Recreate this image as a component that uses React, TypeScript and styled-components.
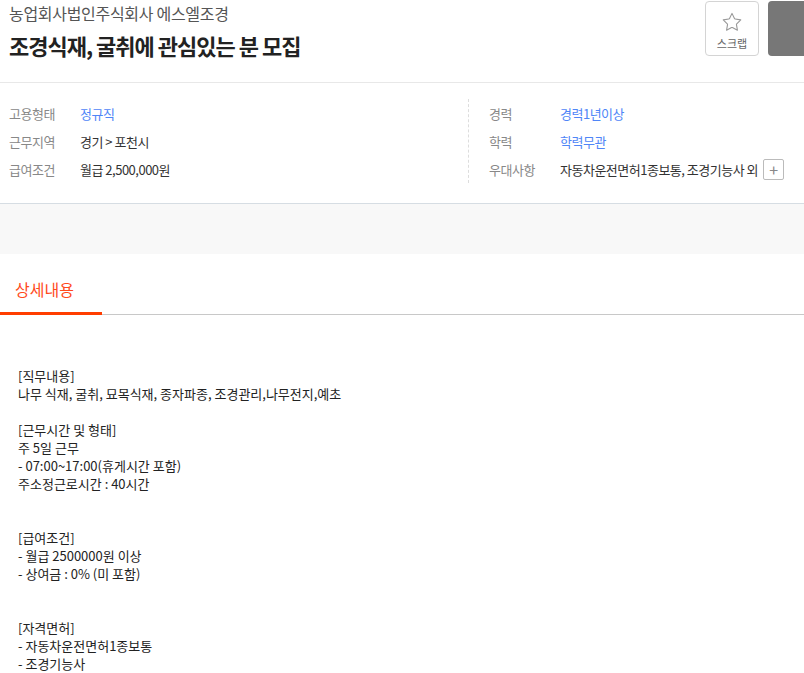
import React, { FC } from "react";
import styled, { createGlobalStyle } from "styled-components";

const GlobalStyle = createGlobalStyle`
  html, body {
    margin: 0;
    padding: 0;
    background: #fff;
    overflow-x: hidden;
  }
  body {
    font-family: "Noto Sans CJK KR", "Noto Sans", sans-serif;
    color: #333;
  }
`;

const Page = styled.div`
  width: 804px;
  overflow: hidden;
`;

const Header = styled.header`
  display: flex;
  justify-content: space-between;
  align-items: flex-start;
  height: 83px;
  box-sizing: border-box;
  padding: 3px 0 0 9px;
  border-bottom: 1px solid #e8e8e8;
`;

const TitleBlock = styled.div`
  display: flex;
  flex-direction: column;
  gap: 7px;
`;

const Company = styled.div`
  font-size: 16px;
  line-height: 20px;
  color: #555;
  letter-spacing: -0.3px;
`;

const Title = styled.h1`
  margin: 0;
  font-size: 22px;
  line-height: 30px;
  font-weight: 700;
  color: #222;
  letter-spacing: -1px;
`;

const Actions = styled.div`
  display: flex;
  gap: 9px;
  margin-top: -2px;
`;

const ScrapButton = styled.button`
  width: 54px;
  height: 55px;
  box-sizing: border-box;
  border: 1px solid #d4d4d4;
  border-radius: 4px;
  background: #fff;
  display: flex;
  flex-direction: column;
  align-items: center;
  justify-content: center;
  gap: 2px;
  padding: 4px 0 0;
  font-family: inherit;
  font-size: 11px;
  color: #666;
  cursor: pointer;
`;

const ApplyBox = styled.div`
  width: 36px;
  height: 55px;
  background: #777;
  border-radius: 4px 0 0 4px;
`;

const Summary = styled.section`
  display: flex;
  padding: 16px 0 20px 9px;
  border-bottom: 1px solid #d6dde3;
`;

const Column = styled.div<{ $divided?: boolean }>`
  width: ${p => (p.$divided ? "auto" : "459px")};
  flex: ${p => (p.$divided ? 1 : "none")};
  padding-left: ${p => (p.$divided ? "20px" : "0")};
  border-left: ${p => (p.$divided ? "1px dashed #ddd" : "none")};
`;

const Row = styled.div`
  display: flex;
  align-items: center;
  height: 28px;
  font-size: 13px;
  letter-spacing: -0.5px;
`;

const Label = styled.span`
  width: 71px;
  flex: none;
  color: #888;
`;

const Value = styled.span<{ $link?: boolean }>`
  color: ${p => (p.$link ? "#4f86f7" : "#333")};
  white-space: nowrap;
`;

const MoreButton = styled.span`
  display: inline-flex;
  align-items: center;
  justify-content: center;
  width: 19px;
  height: 19px;
  margin-left: 5px;
  border: 1px solid #bbb;
  border-radius: 2px;
  color: #888;
  font-size: 16px;
  line-height: 1;
`;

const Band = styled.div`
  height: 50px;
  background: #f8f8f8;
`;

const Tabs = styled.nav`
  display: flex;
  height: 61px;
  box-sizing: border-box;
  border-bottom: 1px solid #c8c8c8;
`;

const Tab = styled.div<{ $active?: boolean }>`
  width: 102px;
  box-sizing: border-box;
  display: flex;
  align-items: flex-end;
  padding: 0 0 11px 15px;
  margin-bottom: -1px;
  font-size: 16px;
  color: ${p => (p.$active ? "#ff4a1c" : "#555")};
  border-bottom: 3px solid ${p => (p.$active ? "#ff3d00" : "transparent")};
`;

const Detail = styled.div`
  padding: 52px 18px 0;
  font-size: 13px;
  line-height: 18px;
  color: #222;
  white-space: pre-wrap;
`;

const StarIcon: FC = () => (
  <svg width="22" height="22" viewBox="0 0 24 24" fill="none">
    <path
      d="M12 2.6l2.7 5.6c.15.3.43.5.76.55l6.1.9-4.4 4.3c-.24.23-.35.57-.3.9l1.05 6.1-5.45-2.87a1 1 0 0 0-.93 0L6.08 20.95l1.05-6.1c.05-.33-.06-.67-.3-.9L2.44 9.650l6.1-.9c.33-.05.61-.25.76-.55z"
      stroke="#999"
      strokeWidth="1.2"
      strokeLinejoin="round"
    />
  </svg>
);

const detailText = `[직무내용]
나무 식재, 굴취, 묘목식재, 종자파종, 조경관리,나무전지,예초

[근무시간 및 형태]
주 5일 근무
- 07:00~17:00(휴게시간 포함)
주소정근로시간 : 40시간


[급여조건]
- 월급 2500000원 이상
- 상여금 : 0% (미 포함)


[자격면허]
- 자동차운전면허1종보통
- 조경기능사`;

const App: FC = () => (
  <Page>
    <GlobalStyle />
    <Header>
      <TitleBlock>
        <Company>농업회사법인주식회사 에스엘조경</Company>
        <Title>조경식재, 굴취에 관심있는 분 모집</Title>
      </TitleBlock>
      <Actions>
        <ScrapButton>
          <StarIcon />
          스크랩
        </ScrapButton>
        <ApplyBox />
      </Actions>
    </Header>

    <Summary>
      <Column>
        <Row>
          <Label>고용형태</Label>
          <Value $link>정규직</Value>
        </Row>
        <Row>
          <Label>근무지역</Label>
          <Value>경기 &gt; 포천시</Value>
        </Row>
        <Row>
          <Label>급여조건</Label>
          <Value>월급 2,500,000원</Value>
        </Row>
      </Column>
      <Column $divided>
        <Row>
          <Label>경력</Label>
          <Value $link>경력1년이상</Value>
        </Row>
        <Row>
          <Label>학력</Label>
          <Value $link>학력무관</Value>
        </Row>
        <Row>
          <Label>우대사항</Label>
          <Value>자동차운전면허1종보통, 조경기능사 외</Value>
          <MoreButton>+</MoreButton>
        </Row>
      </Column>
    </Summary>

    <Band />

    <Tabs>
      <Tab $active>상세내용</Tab>
    </Tabs>

    <Detail>{detailText}</Detail>
  </Page>
);

export default App;
